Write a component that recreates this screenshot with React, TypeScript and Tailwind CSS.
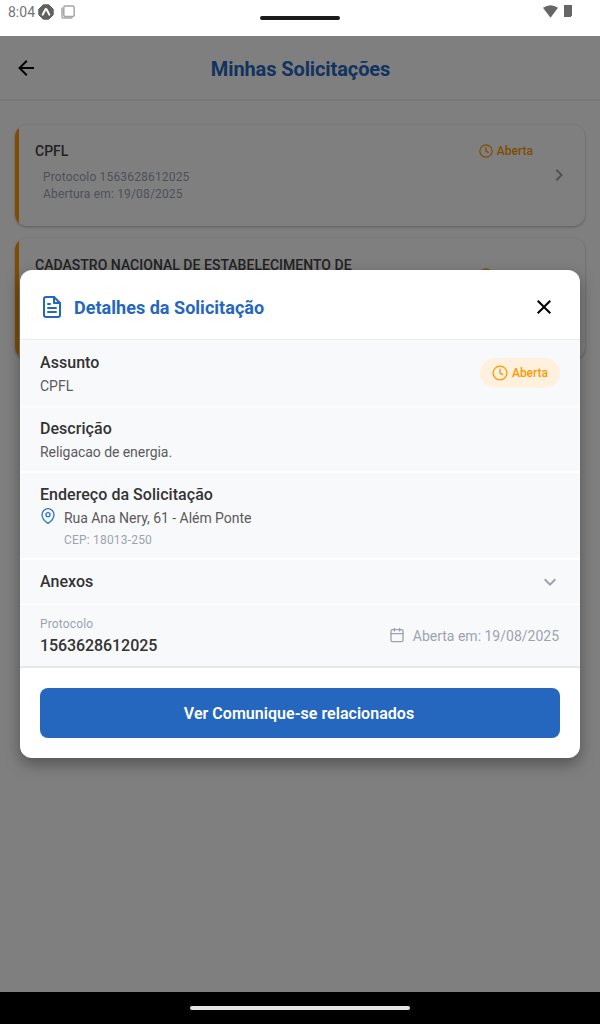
import type { ReactNode } from "react";

type IconProps = { size: number; className?: string; stroke?: number; children: ReactNode };

function Icon({ size, className = "", stroke = 2, children }: IconProps) {
  return (
    <svg
      width={size}
      height={size}
      viewBox="0 0 24 24"
      fill="none"
      stroke="currentColor"
      strokeWidth={stroke}
      strokeLinecap="round"
      strokeLinejoin="round"
      className={`shrink-0 ${className}`}
    >
      {children}
    </svg>
  );
}

function Glyph({ d, size = 24, className = "" }: { d: string; size?: number; className?: string }) {
  return (
    <svg width={size} height={size} viewBox="0 0 24 24" fill="currentColor" className={`shrink-0 ${className}`}>
      <path d={d} />
    </svg>
  );
}

function ClockIcon({ size }: { size: number }) {
  return (
    <Icon size={size} stroke={1.8}>
      <circle cx="12" cy="12" r="9.2" />
      <path d="M12 7v5.200l3.500 2" />
    </Icon>
  );
}

const ARROW_LEFT = "M20 11v2H8l5.5 5.5-1.42 1.42L4.16 12l7.92-7.92L13.5 5.5 8 11z";
const CLOSE = "M19 6.41 17.59 5 12 10.59 6.41 5 5 6.41 10.59 12 5 17.59 6.41 19 12 13.41 17.59 19 19 17.59 13.41 12z";
const CHEVRON_DOWN = "M7.41 8.59 12 13.17l4.59-4.58L18 10l-6 6-6-6z";
const CHEVRON_RIGHT = "M8.59 16.59 13.17 12 8.59 7.41 10 6l6 6-6 6z";

function StatusBar() {
  return (
    <div className="flex h-9 items-start justify-between bg-white text-[#747474]">
      <div className="flex w-[260px] items-center pt-1 pl-2">
        <span className="w-[30px] text-sm leading-4 whitespace-nowrap">8:04</span>
        <svg width="16" height="16" viewBox="0 0 16 16">
          <path d="M5.2.8h5.6l4.4 4.4v5.6l-4.4 4.4H5.2L.8 10.800V5.200z" fill="#616161" stroke="#616161" strokeLinejoin="round" />
          <path d="M4.700 10.600 7.200 5.700q.8-1.200 1.600 0l2.500 4.900" fill="none" stroke="#fff" strokeWidth="2" strokeLinecap="round" />
        </svg>
        <svg width="14" height="14" viewBox="0 0 14 14" className="ml-[7px]" fill="none">
          <path d="M1 2.500V11.500Q1 13 2.500 13H11.500" stroke="#bcbcbc" strokeWidth="2" />
          <rect x="2.800" y="1" width="10.400" height="10.400" rx="1.500" stroke="#a6a6a6" strokeWidth="1.500" />
        </svg>
      </div>
      <div className="mt-4 h-1 w-20 rounded-sm bg-[#1b1b1b]" />
      <div className="flex w-[260px] items-start justify-end gap-[6px] pt-[5px] pr-7">
        <svg width="15" height="13" viewBox="0 0 15 13" fill="#666">
          <path d="M0 2.800Q7.500-2.400 15 2.800L7.500 12.800z" />
        </svg>
        <svg width="8" height="12" viewBox="0 0 8 12" fill="#666">
          <path d="M0 0h8v11H7v1H0z" />
        </svg>
      </div>
    </div>
  );
}

function RequestCard({ title, children, tall }: { title: string; children?: ReactNode; tall?: boolean }) {
  return (
    <div
      className={`flex overflow-hidden rounded-xl bg-white pr-[14px] shadow-[0_1px_3px_rgba(0,0,0,0.28)] ${
        tall ? "h-[121px]" : "h-[101px]"
      }`}
    >
      <div className="w-1 bg-[#ff9800]" />
      <div className={`flex-1 pl-4 ${tall ? "pt-[17px]" : "pt-4"}`}>
        <h2 className="w-[340px] text-sm leading-5 font-medium tracking-[0.02px] text-[#444]">{title}</h2>
        {children}
      </div>
      <div className={`flex items-start gap-[3px] self-start text-xs font-medium text-[#ff9800] ${tall ? "mt-[29px]" : "mt-[18px]"}`}>
        <ClockIcon size={16} />
        <span className={tall ? "pt-px leading-4" : "leading-4"}>Aberta</span>
      </div>
      <Glyph d={CHEVRON_RIGHT} className="mb-[2px] ml-[14px] self-center text-[#9ca3af]" />
    </div>
  );
}

function SectionTitle({ children }: { children: ReactNode }) {
  return <h3 className="text-base leading-[22px] font-medium tracking-[0.04px] text-[#333]">{children}</h3>;
}

function DetailsModal() {
  return (
    <div className="h-[488px] w-full overflow-hidden rounded-xl bg-white shadow-[0_6px_15px_rgba(0,0,0,0.35)]">
      <header className="flex h-[70px] items-center border-b border-[#ececec] px-5 pt-1">
        <Icon size={24} className="text-[#2567be]">
          <path d="M14 2H6a2 2 0 0 0-2 2v16a2 2 0 0 0 2 2h12a2 2 0 0 0 2-2V8z" />
          <path d="M14 2v6h6M16 13H8M16 17H8M10 9H8" />
        </Icon>
        <h2 className="mt-[2px] ml-[10px] flex-1 text-lg leading-6 font-bold tracking-[0.03px] text-[#2567be]">Detalhes da Solicitação</h2>
        <button className="mr-1 text-black" aria-label="Fechar">
          <Glyph d={CLOSE} />
        </button>
      </header>

      <div className="bg-[#f8f9fb]">
        <section className="flex h-[67px] items-center justify-between border-b border-white px-5">
          <div className="pt-px">
            <SectionTitle>Assunto</SectionTitle>
            <p className="mt-[2px] text-sm leading-5 text-[#5a5a5a]">CPFL</p>
          </div>
          <div className="flex h-[30px] w-20 items-center justify-center gap-[3px] rounded-full bg-[#fff1dd] pr-px text-[#ff9800]">
            <ClockIcon size={18} />
            <span className="text-xs leading-4 font-medium">Aberta</span>
          </div>
        </section>

        <section className="h-[66px] border-b-2 border-white px-5 pt-[11px]">
          <SectionTitle>Descrição</SectionTitle>
          <p className="mt-[2px] text-sm leading-5 tracking-[-0.06px] text-[#5a5a5a]">Religacao de energia.</p>
        </section>

        <section className="h-[87px] border-b-2 border-white px-5 pt-[11px]">
          <SectionTitle>Endereço da Solicitação</SectionTitle>
          <div className="flex gap-2">
            <Icon size={16} className="mt-[2px] text-[#2f76d2]">
              <path d="M21 10c0 7-9 13-9 13s-9-6-9-13a9 9 0 0 1 18 0z" />
              <circle cx="12" cy="10" r="3" />
            </Icon>
            <div>
              <p className="mt-[2px] text-sm leading-5 tracking-[-0.04px] text-[#5a5a5a]">Rua Ana Nery, 61 - Além Ponte</p>
              <p className="mt-1 text-xs leading-4 tracking-[0.19px] text-[#9ca3af]">CEP: 18013-250</p>
            </div>
          </div>
        </section>

        <section className="flex h-[45px] items-center justify-between border-b border-white pr-[18px] pl-5">
          <SectionTitle>Anexos</SectionTitle>
          <Glyph d={CHEVRON_DOWN} className="text-[#9ca3af]" />
        </section>

        <section className="flex h-[63px] items-center justify-between border-b-2 border-[#e5e7e9] pr-[21px] pl-5">
          <div className="pt-[2px]">
            <p className="text-xs leading-4 tracking-[0.15px] text-[#9ca3af]">Protocolo</p>
            <p className="mt-[3px] text-base leading-[22px] font-medium tracking-[-0.08px] text-[#333]">1563628612025</p>
          </div>
          <div className="flex items-center gap-2 text-[#9ca3af]">
            <Icon size={16} className="mb-px">
              <rect x="3" y="4" width="18" height="18" rx="2" />
              <path d="M16 2v4M8 2v4M3 10h18" />
            </Icon>
            <span className="text-sm leading-5">Aberta em: 19/08/2025</span>
          </div>
        </section>
      </div>

      <div className="p-5">
        <button className="h-[50px] w-full rounded-lg bg-[#2567be] pt-[2px] pr-[2px] text-base font-semibold tracking-[0.03px] text-white">
          Ver Comunique-se relacionados
        </button>
      </div>
    </div>
  );
}

export default function App() {
  return (
    <div className="flex h-[1024px] w-[600px] flex-col overflow-hidden bg-white font-['Roboto',sans-serif]">
      <StatusBar />
      <main className="relative h-[956px] overflow-hidden bg-white">
        <header className="flex h-[65px] items-center border-b-2 border-[#f0f0f0] pr-4 pl-[14px]">
          <Glyph d={ARROW_LEFT} className="text-black" />
          <h1 className="flex-1 pt-[2px] pr-[21px] text-center text-xl leading-6 font-bold tracking-[-0.1px] text-[#2567be]">
            Minhas Solicitações
          </h1>
        </header>
        <div className="flex flex-col gap-3 px-[15px] pt-6">
          <RequestCard title="CPFL">
            <div className="mt-2 pl-2 text-xs leading-[17px] tracking-[0.17px] text-[#9ca3af]">
              <p>Protocolo 1563628612025</p>
              <p>Abertura em: 19/08/2025</p>
            </div>
          </RequestCard>
          <RequestCard title="CADASTRO NACIONAL DE ESTABELECIMENTO DE SAÚDE" tall />
        </div>
        <div className="absolute inset-0 flex items-center bg-black/50 px-5">
          <DetailsModal />
        </div>
      </main>
      <footer className="flex h-8 items-center justify-center bg-black">
        <div className="h-1 w-[220px] rounded-sm bg-[#e6e6e6]" />
      </footer>
    </div>
  );
}
